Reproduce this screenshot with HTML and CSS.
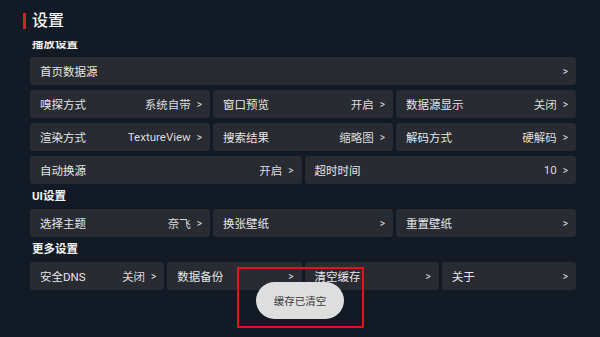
FILE: index.html
```html
<!DOCTYPE html>
<html lang="zh-CN">
<head>
<meta charset="utf-8">
<link rel="stylesheet" href="styles.css">
</head>
<body>
<div class="page">
  <header class="top">
    <span class="bar"></span>
    <h1 class="title">设置</h1>
  </header>
  <div class="scroll">
    <div class="list">
      <div class="sec">播放设置</div>
      <div class="row cols1">
        <div class="card"><span class="label">首页数据源</span><span class="val"></span><span class="arr">&gt;</span></div>
      </div>
      <div class="row cols3">
        <div class="card"><span class="label">嗅探方式</span><span class="val">系统自带</span><span class="arr">&gt;</span></div>
        <div class="card"><span class="label">窗口预览</span><span class="val">开启</span><span class="arr">&gt;</span></div>
        <div class="card"><span class="label">数据源显示</span><span class="val">关闭</span><span class="arr">&gt;</span></div>
      </div>
      <div class="row cols3">
        <div class="card"><span class="label">渲染方式</span><span class="val">TextureView</span><span class="arr">&gt;</span></div>
        <div class="card"><span class="label">搜索结果</span><span class="val">缩略图</span><span class="arr">&gt;</span></div>
        <div class="card"><span class="label">解码方式</span><span class="val">硬解码</span><span class="arr">&gt;</span></div>
      </div>
      <div class="row cols2">
        <div class="card"><span class="label">自动换源</span><span class="val">开启</span><span class="arr">&gt;</span></div>
        <div class="card"><span class="label">超时时间</span><span class="val">10</span><span class="arr">&gt;</span></div>
      </div>
      <div class="sec">UI设置</div>
      <div class="row cols3">
        <div class="card"><span class="label">选择主题</span><span class="val">奈飞</span><span class="arr">&gt;</span></div>
        <div class="card"><span class="label">换张壁纸</span><span class="val"></span><span class="arr">&gt;</span></div>
        <div class="card"><span class="label">重置壁纸</span><span class="val"></span><span class="arr">&gt;</span></div>
      </div>
      <div class="sec">更多设置</div>
      <div class="row cols4">
        <div class="card"><span class="label">安全DNS</span><span class="val">关闭</span><span class="arr">&gt;</span></div>
        <div class="card"><span class="label">数据备份</span><span class="val"></span><span class="arr">&gt;</span></div>
        <div class="card"><span class="label">清空缓存</span><span class="val"></span><span class="arr">&gt;</span></div>
        <div class="card"><span class="label">关于</span><span class="val"></span><span class="arr">&gt;</span></div>
      </div>
    </div>
  </div>
  <div class="focus"></div>
  <div class="toast">缓存已清空</div>
</div>
</body>
</html>
```
FILE: styles.css
```css
* { box-sizing: border-box; }
html, body { margin: 0; padding: 0; }
body {
  background: #121a25;
  font-family: Roboto, "Noto Sans CJK SC", sans-serif;
  color: #e4e4e4;
}
.page {
  position: relative;
  width: 600px;
  height: 337px;
  overflow: hidden;
}
.top {
  height: 41px;
  display: flex;
  align-items: center;
  padding-left: 23px;
}
.bar {
  width: 3px;
  height: 16px;
  background: #d8202a;
  margin-right: 6px;
}
.title {
  margin: 0;
  font-size: 16px;
  font-weight: 500;
  line-height: 20px;
  color: #f4f4f4;
}
.scroll {
  height: 296px;
  overflow: hidden;
  padding: 0 24px 0 30px;
}
.list {
  margin-top: -9px;
  display: flex;
  flex-direction: column;
}
.sec {
  height: 25px;
  line-height: 25px;
  padding-left: 2px;
  font-size: 11.5px;
  font-weight: 700;
  color: #f2f2f2;
}
.row {
  display: grid;
  gap: 3px;
  margin-bottom: 5px;
}
.row:has(+ .sec), .row:last-child { margin-bottom: 0; }
.cols1 { grid-template-columns: 1fr; }
.cols2 { grid-template-columns: 1fr 1fr; }
.cols3 { grid-template-columns: 1fr 1fr 1fr; }
.cols4 { grid-template-columns: 1fr 1fr 1fr 1fr; }
.card {
  height: 28px;
  background: #282b31;
  border-radius: 3px;
  display: flex;
  align-items: center;
  padding: 0 8px 0 10px;
  font-size: 11.5px;
  white-space: nowrap;
}
.label { flex: 1; color: #e6e6e6; }
.val { color: #dcdcdc; }
.arr {
  margin-left: 6px;
  font-size: 10px;
  color: #e0e0e0;
}
.focus {
  position: absolute;
  left: 237px;
  top: 267px;
  width: 127px;
  height: 61px;
  border: 2px solid #e3121b;
}
.toast {
  position: absolute;
  left: 256px;
  top: 282px;
  width: 88px;
  height: 37px;
  border-radius: 18.5px;
  background: #dedede;
  color: #3a3a3a;
  font-size: 10.5px;
  display: flex;
  align-items: center;
  justify-content: center;
  font-family: "Noto Sans CJK SC", sans-serif;
}
```
